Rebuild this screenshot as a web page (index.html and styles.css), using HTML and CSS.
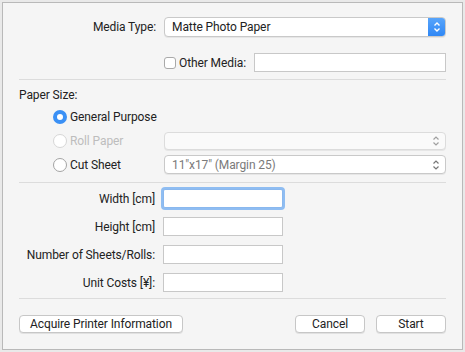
FILE: index.html
```html
<!DOCTYPE html>
<html lang="en">
<head>
<meta charset="UTF-8">
<title>Print Settings</title>
<link rel="stylesheet" href="styles.css">
</head>
<body>
<div class="dialog">
    <div class="grid">
        <label class="label">Media Type:</label>
        <div class="popup active">
            <span>Matte Photo Paper</span>
            <span class="arrows blue">
                <svg width="8" height="12" viewBox="0 0 8 12"><path d="M1.5 4.5 L4 2 L6.5 4.5 M1.5 7.5 L4 10 L6.5 7.5" fill="none" stroke="#fff" stroke-width="1.4"/></svg>
            </span>
        </div>

        <div class="other-row">
            <span class="checkbox"></span>
            <span class="other-label">Other Media:</span>
            <span class="field wide"></span>
        </div>
    </div>

    <hr class="sep sep-top">

    <div class="section-title">Paper Size:</div>

    <div class="grid radios">
        <div class="radio-wrap"><span class="radio on"></span>General Purpose</div>
        <div></div>

        <div class="radio-wrap disabled"><span class="radio"></span>Roll Paper</div>
        <div class="popup disabled">
            <span></span>
            <span class="arrows">
                <svg width="8" height="12" viewBox="0 0 8 12"><path d="M1.5 4.5 L4 2 L6.5 4.5 M1.5 7.5 L4 10 L6.5 7.5" fill="none" stroke="#a0a0a0" stroke-width="1.2"/></svg>
            </span>
        </div>

        <div class="radio-wrap"><span class="radio"></span>Cut Sheet</div>
        <div class="popup gray">
            <span>11"x17" (Margin 25)</span>
            <span class="arrows">
                <svg width="8" height="12" viewBox="0 0 8 12"><path d="M1.5 4.5 L4 2 L6.5 4.5 M1.5 7.5 L4 10 L6.5 7.5" fill="none" stroke="#777" stroke-width="1.2"/></svg>
            </span>
        </div>
    </div>

    <hr class="sep sep-mid">

    <div class="grid fields">
        <label class="label">Width [cm]</label>
        <span class="field small focus"></span>
        <label class="label">Height [cm]</label>
        <span class="field small"></span>
        <label class="label">Number of Sheets/Rolls:</label>
        <span class="field small"></span>
        <label class="label">Unit Costs [¥]:</label>
        <span class="field small"></span>
    </div>

    <hr class="sep sep-bottom">

    <div class="buttons">
        <button class="btn acquire">Acquire Printer Information</button>
        <div class="spacer"></div>
        <button class="btn">Cancel</button>
        <button class="btn">Start</button>
    </div>
</div>
</body>
</html>
```

FILE: styles.css
```css
body {
    margin: 0;
    padding: 0;
    background-color: #e9e9e9;
    font-family: Roboto, "Liberation Sans", Arial, sans-serif;
    font-size: 12px;
    letter-spacing: -0.1px;
    color: #222;
}

.dialog {
    box-sizing: border-box;
    margin: 2px 2px 0 2px;
    width: 461px;
    height: 348px;
    border: 1px solid #b9b9b9;
    background-color: #f5f5f5;
    padding: 14px 16px 0 16px;
}

.grid {
    display: grid;
    grid-template-columns: 137px 1fr;
    column-gap: 8px;
    align-items: center;
}

.label {
    text-align: right;
    white-space: nowrap;
}

.popup {
    box-sizing: border-box;
    height: 20px;
    display: flex;
    align-items: center;
    justify-content: space-between;
    background-color: #fff;
    border: 1px solid #c9c9c9;
    border-radius: 4px;
    box-shadow: 0 1px 0 rgba(0, 0, 0, 0.06);
    padding-left: 7px;
    overflow: hidden;
}

.popup .arrows {
    width: 18px;
    height: 100%;
    display: flex;
    align-items: center;
    justify-content: center;
}

.popup .arrows.blue {
    background: linear-gradient(#5aa6fb, #2d86f5);
    margin-right: -1px;
    border-radius: 0 4px 4px 0;
    height: 20px;
}

.popup.disabled {
    background-color: #fafafa;
    border-color: #dcdcdc;
    height: 18px;
}

.popup.gray {
    color: #7a7a7a;
    height: 19px;
}

.other-row {
    grid-column: 2;
    display: flex;
    align-items: center;
    margin-top: 16px;
}

.checkbox {
    box-sizing: border-box;
    flex-shrink: 0;
    width: 12px;
    height: 12px;
    border: 1px solid #a9a9a9;
    border-radius: 3px;
    background-color: #fff;
    margin-right: 3px;
}

.other-label {
    margin-right: 8px;
}

.field {
    box-sizing: border-box;
    display: block;
    height: 19px;
    background-color: #fff;
    border: 1px solid #c8c8c8;
}

.field.wide {
    flex: 1;
}

.field.small {
    width: 120px;
    margin-left: -1px;
}

.field.focus {
    border-color: #8ab8ee;
    box-shadow: 0 0 0 2px #8fbdf2;
    border-radius: 2px;
}

.sep {
    border: none;
    border-top: 1px solid #dcdcdc;
    margin: 0;
}

.sep-top {
    margin-top: 7px;
}

.section-title {
    margin-top: 7px;
    line-height: 16px;
}

.radios {
    row-gap: 5px;
    margin-top: 4px;
}

.radio-wrap {
    display: flex;
    align-items: center;
    padding-left: 34px;
    height: 19px;
    white-space: nowrap;
}

.radio-wrap.disabled {
    color: #bdbdbd;
}

.radio {
    box-sizing: border-box;
    flex-shrink: 0;
    width: 14px;
    height: 14px;
    border-radius: 50%;
    border: 1px solid #a3a3a3;
    background-color: #fff;
    margin-right: 3px;
}

.radio-wrap.disabled .radio {
    border-color: #d6d6d6;
}

.radio.on {
    border: 4.5px solid #3a90f5;
}

.sep-mid {
    margin-top: 8px;
}

.fields {
    row-gap: 9px;
    margin-top: 6px;
}

.fields .label {
    margin-right: 1px;
}

.sep-bottom {
    margin-top: 6px;
}

.buttons {
    display: flex;
    align-items: center;
    gap: 11px;
    margin-top: 16px;
}

.spacer {
    flex: 1;
}

.btn {
    box-sizing: border-box;
    height: 18px;
    padding: 0;
    font-family: inherit;
    font-size: 12px;
    letter-spacing: -0.1px;
    color: #222;
    background-color: #fff;
    border: 1px solid #c7c7c7;
    border-radius: 4px;
    box-shadow: 0 1px 0 rgba(0, 0, 0, 0.08);
    width: 70px;
}

.btn.acquire {
    width: 164px;
}
```
